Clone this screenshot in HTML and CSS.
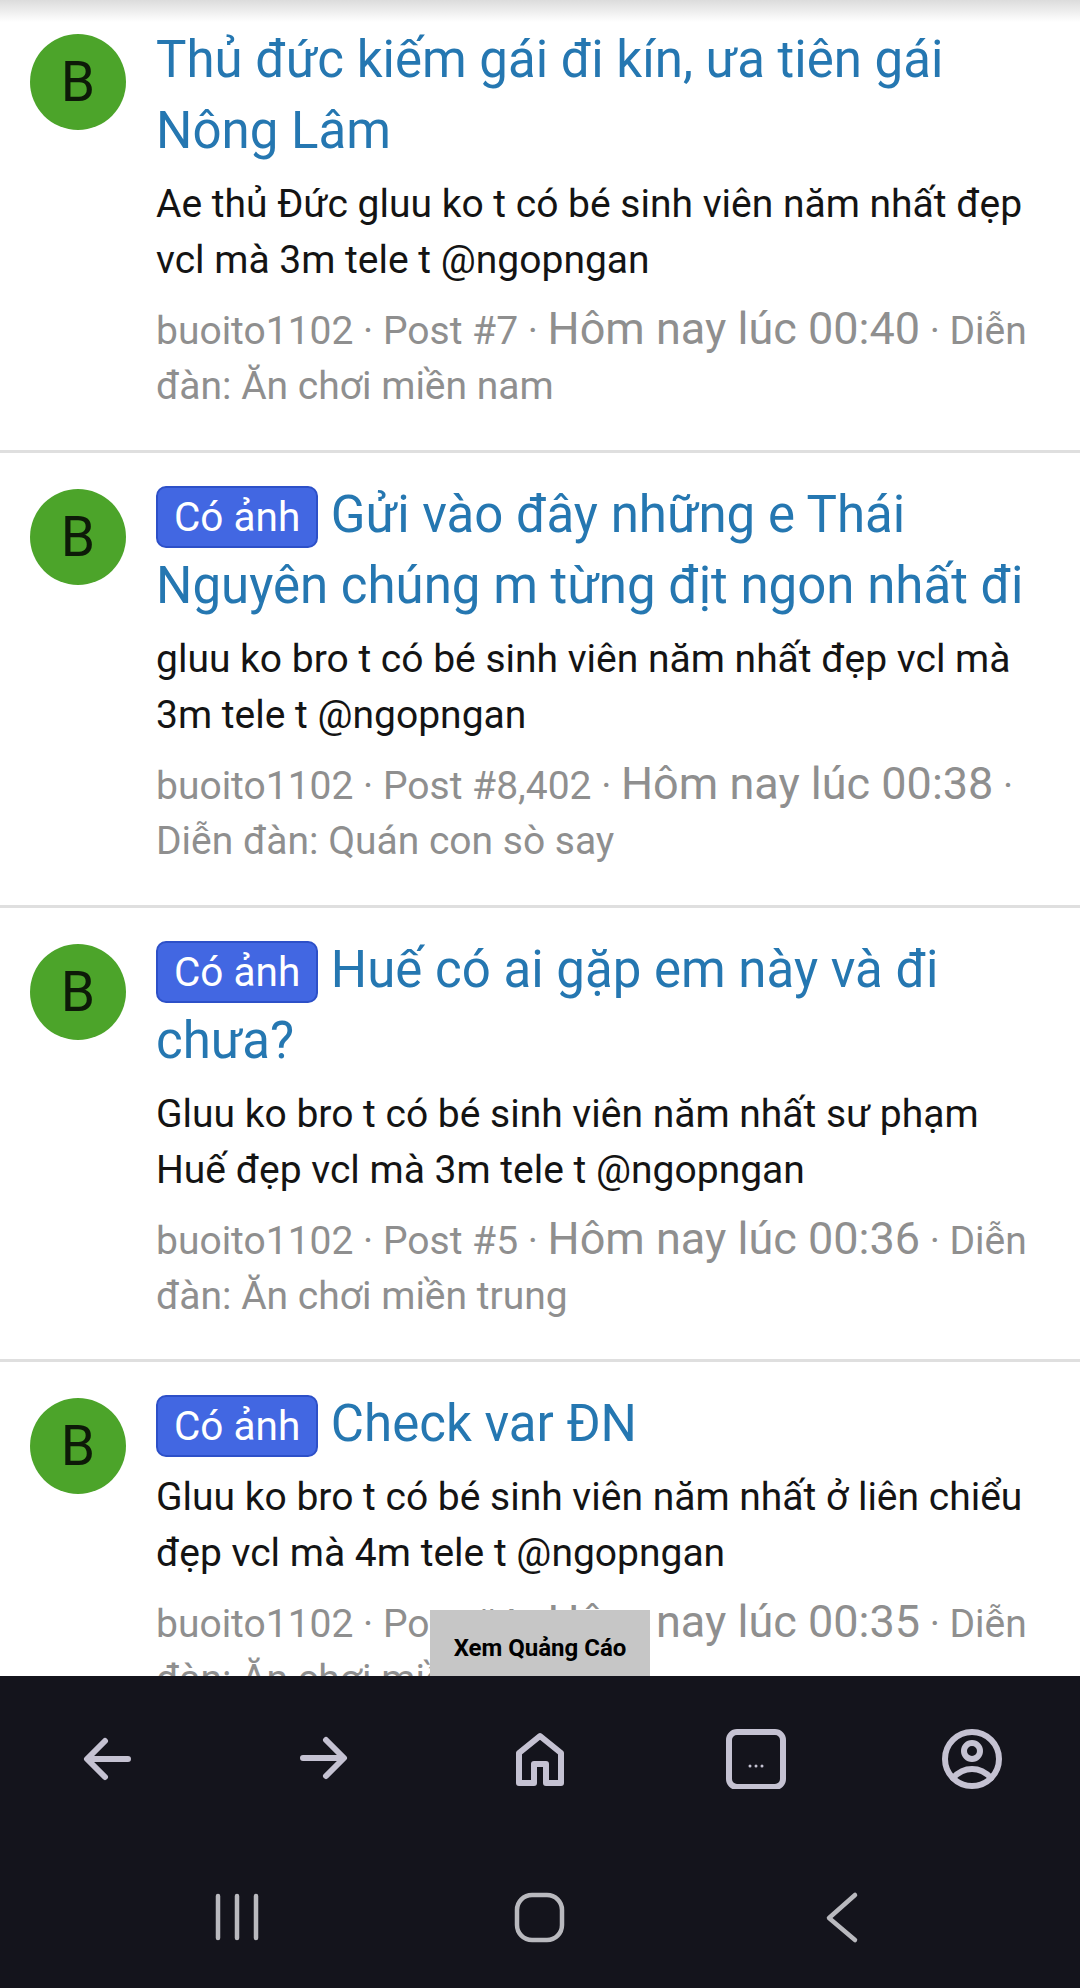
FILE: index.html
```html
<!DOCTYPE html>
<html>

	<head>
		<meta charset="UTF-8">
		<title>Kết quả tìm kiếm</title>
		<link rel="stylesheet" href="styles.css">
	</head>

	<body>
		<div class="screen">
			<div class="list">
				<div class="row">
					<div class="avatar">B</div>
					<div class="main">
						<a class="title">Thủ đức kiếm gái đi kín, ưa tiên gái Nông Lâm</a>
						<p class="snippet">Ae thủ Đức gluu ko t có bé sinh viên năm nhất đẹp vcl mà 3m tele t @ngopngan</p>
						<p class="meta">buoito1102 · Post #7 · <span class="time">Hôm nay lúc 00:40</span> · Diễn đàn: Ăn chơi miền nam</p>
					</div>
				</div>
				<div class="row">
					<div class="avatar">B</div>
					<div class="main">
						<a class="title"><span class="tag">Có ảnh</span> Gửi vào đây những e Thái Nguyên chúng m từng địt ngon nhất đi</a>
						<p class="snippet">gluu ko bro t có bé sinh viên năm nhất đẹp vcl mà 3m tele t @ngopngan</p>
						<p class="meta">buoito1102 · Post #8,402 · <span class="time">Hôm nay lúc 00:38</span> · Diễn đàn: Quán con sò say</p>
					</div>
				</div>
				<div class="row">
					<div class="avatar">B</div>
					<div class="main">
						<a class="title"><span class="tag">Có ảnh</span> Huế có ai gặp em này và đi chưa?</a>
						<p class="snippet">Gluu ko bro t có bé sinh viên năm nhất sư phạm Huế đẹp vcl mà 3m tele t @ngopngan</p>
						<p class="meta">buoito1102 · Post #5 · <span class="time">Hôm nay lúc 00:36</span> · Diễn đàn: Ăn chơi miền trung</p>
					</div>
				</div>
				<div class="row">
					<div class="avatar">B</div>
					<div class="main">
						<a class="title"><span class="tag">Có ảnh</span> Check var ĐN</a>
						<p class="snippet">Gluu ko bro t có bé sinh viên năm nhất ở liên chiểu đẹp vcl mà 4m tele t @ngopngan</p>
						<p class="meta">buoito1102 · Post #4 · <span class="time">Hôm nay lúc 00:35</span> · Diễn đàn: Ăn chơi miền nam</p>
					</div>
				</div>
				<div class="topShade"></div>
				<div class="adBtn">Xem Quảng Cáo</div>
			</div>

			<div class="browserBar">
				<div class="barCell"><svg class="barIcon" viewBox="0 0 60 60"><path d="M50 30H10M27 12L9 30L27 48"/></svg></div>
				<div class="barCell"><svg class="barIcon" viewBox="0 0 60 60"><path d="M9 29H49M32 11L50 29L32 47"/></svg></div>
				<div class="barCell"><svg class="barIcon" viewBox="0 0 60 60"><path d="M9 54V24L30 7L51 24V54H36V35H24V54Z"/></svg></div>
				<div class="barCell"><svg class="barIcon" viewBox="0 0 60 60"><rect x="3" y="3" width="54" height="55" rx="8"/><circle class="dot" cx="24" cy="37" r="1.5"/><circle class="dot" cx="30" cy="37" r="1.5"/><circle class="dot" cx="36" cy="37" r="1.5"/></svg></div>
				<div class="barCell"><svg class="barIcon" viewBox="0 0 60 60"><circle cx="30" cy="30" r="27"/><circle cx="30" cy="22" r="8"/><path d="M11 49C22 37 38 37 49 49"/></svg></div>
			</div>

			<div class="sysBar">
				<svg class="sysIcon" viewBox="0 0 60 60"><path d="M11 9V51M30 9V51M49 9V51"/></svg>
				<svg class="sysIcon" viewBox="0 0 60 60"><rect x="7" y="8" width="45" height="45" rx="15"/></svg>
				<svg class="sysIcon" viewBox="0 0 60 60"><path d="M43 8L17 31L43 53"/></svg>
			</div>
		</div>
	</body>

</html>
```

FILE: styles.css
```css
* {
	margin: 0px;
	padding: 0px;
	box-sizing: border-box;
}

body {
	font-family: Roboto, "Noto Sans", sans-serif;
	background: #fff;
}

.screen {
	width: 1080px;
	height: 1988px;
	display: flex;
	flex-direction: column;
	overflow: hidden;
}

.list {
	position: relative;
	flex: 1;
	overflow: hidden;
	background: #fff;
}

.topShade {
	position: absolute;
	top: 0;
	left: 0;
	right: 0;
	height: 22px;
	background: linear-gradient(#dcdcdc, #fff);
}

.row {
	display: flex;
	height: 452.8px;
	margin-bottom: 2px;
	padding: 24px 30px 0 30px;
	border-bottom: 3px solid #dfdfdf;
}

.avatar {
	flex: none;
	width: 96px;
	height: 96px;
	margin-top: 10px;
	border-radius: 50%;
	background: #4ca42a;
	color: #0d1a08;
	font-size: 55px;
	line-height: 96px;
	text-align: center;
}

.main {
	margin-left: 30px;
	flex: 1;
}

.title {
	display: block;
	color: #2577b1;
	font-size: 51px;
	line-height: 71px;
}

.tag {
	display: inline-block;
	height: 62px;
	padding: 0 16px;
	border: 2px solid #2d50c8;
	border-radius: 10px;
	background: #4267e2;
	color: #fff;
	font-size: 40.5px;
	line-height: 58px;
	vertical-align: 1px;
}

.snippet {
	margin-top: 10px;
	color: #141414;
	font-size: 39px;
	line-height: 56px;
}

.meta {
	margin-top: 13px;
	color: #8f8f8f;
	font-size: 39px;
	line-height: 55px;
}

.time {
	font-size: 45px;
}

.adBtn {
	position: absolute;
	left: 430px;
	bottom: 0;
	width: 220px;
	height: 66px;
	background: #c6c6c6;
	color: #000;
	font-size: 24px;
	font-weight: 700;
	line-height: 76px;
	text-align: center;
}

.browserBar {
	flex: none;
	height: 166px;
	display: flex;
	align-items: center;
	background: #14141c;
}

.barCell {
	flex: 1;
	display: flex;
	justify-content: center;
}

.barIcon {
	width: 60px;
	height: 60px;
	fill: none;
	stroke: #c5c2d2;
	stroke-width: 6;
	stroke-linecap: round;
	stroke-linejoin: round;
}

.dot {
	fill: #c5c2d2;
	stroke: none;
}

.sysBar {
	flex: none;
	height: 146px;
	padding: 3px 208px 0 207px;
	display: flex;
	justify-content: space-between;
	align-items: center;
	background: #14141c;
}

.sysIcon {
	width: 60px;
	height: 60px;
	fill: none;
	stroke: #b9b9be;
	stroke-width: 4.5;
	stroke-linecap: round;
	stroke-linejoin: round;
}
```
